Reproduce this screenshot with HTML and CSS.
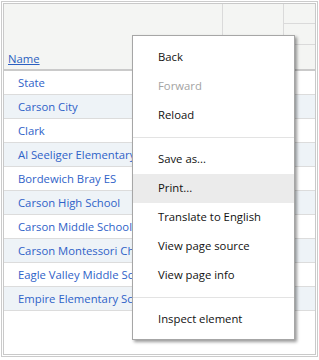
FILE: index.html
```html
<!DOCTYPE html>
<html lang="en">

<head>
    <meta charset="UTF-8">
    <meta name="viewport" content="width=device-width, initial-scale=1.0">
    <title>Schools grid</title>
    <link rel="stylesheet" href="styles.css">
</head>

<body>
    <div class="frame">
        <div class="grid">
            <!-- column headers -->
            <div class="grid-head">
                <div class="head-name"><a href="#">Name</a></div>
                <div class="head-mid"></div>
                <div class="head-right">
                    <div class="head-cell"></div>
                    <div class="head-cell"></div>
                    <div class="head-cell"></div>
                </div>
            </div>
            <div class="row">State</div>
            <div class="row alt">Carson City</div>
            <div class="row">Clark</div>
            <div class="row alt">Al Seeliger Elementary</div>
            <div class="row">Bordewich Bray ES</div>
            <div class="row alt">Carson High School</div>
            <div class="row">Carson Middle School</div>
            <div class="row alt">Carson Montessori Charter</div>
            <div class="row">Eagle Valley Middle School</div>
            <div class="row alt">Empire Elementary School</div>
        </div>
    </div>

    <!-- browser context menu -->
    <ul class="context-menu">
        <li>Back</li>
        <li class="disabled">Forward</li>
        <li>Reload</li>
        <li class="sep"></li>
        <li>Save as...</li>
        <li class="hover">Print...</li>
        <li>Translate to English</li>
        <li>View page source</li>
        <li>View page info</li>
        <li class="sep"></li>
        <li>Inspect element</li>
    </ul>
</body>

</html>
```

FILE: styles.css
```css
* {
    box-sizing: border-box;
}

body {
    margin: 0;
    padding: 0;
    background: #ffffff;
    font-family: 'Open Sans', 'Noto Sans', sans-serif;
    font-size: 11.3px;
}

/* outer double frame */
.frame {
    margin: 1px 0 0 1px;
    width: 317px;
    height: 356px;
    border: 1px solid #cbcbcb;
    padding: 1px;
}

.grid {
    height: 100%;
    border: 1px solid #c9c9c9;
    background: #fff;
    overflow: hidden;
}

.grid-head {
    display: flex;
    height: 67px;
    background: #f4f5f3;
    border-bottom: 2px solid #cacaca;
}

.head-name {
    flex: 0 0 219px;
    display: flex;
    align-items: flex-end;
    padding: 0 0 2px 4px;
    border-right: 1px solid #dadada;
    line-height: 16px;
}

.head-name a {
    color: #2b5fc0;
    text-decoration: underline;
}

.head-mid {
    flex: 0 0 61px;
    border-right: 1px solid #dadada;
}

.head-right {
    flex: 1;
    display: flex;
    flex-direction: column;
}

.head-cell {
    height: 21px;
    border-bottom: 1px solid #dadada;
}

.head-cell:first-child {
    height: 20px;
}

.head-cell:last-child {
    flex: 1;
    border-bottom: none;
}

.row {
    height: 24px;
    line-height: 24px;
    padding-left: 14px;
    border-bottom: 1px solid #dcdcdc;
    color: #2f62c8;
    white-space: nowrap;
    overflow: hidden;
}

.row.alt {
    background: #eef3f7;
}

/* context menu */
.context-menu {
    position: absolute;
    left: 132px;
    top: 35px;
    width: 163px;
    margin: 0;
    padding: 7px 0 5px;
    list-style: none;
    background: #fff;
    border: 1px solid #a6a6a6;
    box-shadow: 2px 2px 3px rgba(0, 0, 0, 0.4);
    font-size: 11.3px;
    color: #111;
}

.context-menu li {
    height: 29px;
    line-height: 27px;
    padding: 0 0 2px 25px;
    white-space: nowrap;
}

.context-menu li.disabled {
    color: #a3a3a3;
}

.context-menu li.hover {
    background: #ebebeb;
}

.context-menu li.sep {
    height: 1px;
    padding: 0;
    margin: 7px 0;
    background: #e3e3e3;
}
```
